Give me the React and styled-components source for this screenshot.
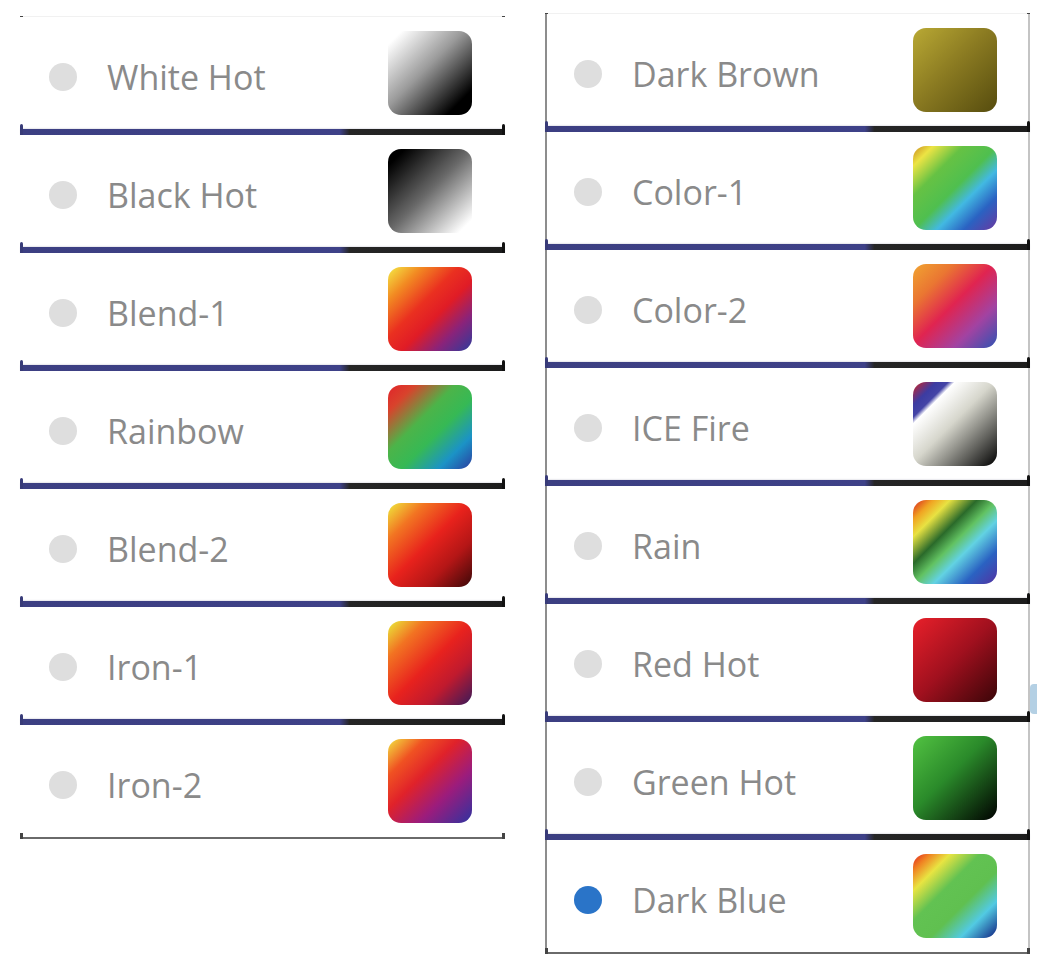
import styled, { createGlobalStyle } from 'styled-components';

const GlobalStyle = createGlobalStyle`
  html, body {
    margin: 0;
    padding: 0;
    background: #ffffff;
  }
  body {
    font-family: "Open Sans", "Noto Sans", sans-serif;
  }
`;

const Page = styled.div`
  display: flex;
  align-items: flex-start;
  gap: 40px;
  width: 1037px;
  height: 960px;
  padding-left: 20px;
  box-sizing: border-box;
  overflow: hidden;
  background: #fff;
`;

const Column = styled.div`
  width: 485px;
  display: flex;
  flex-direction: column;
  padding-top: ${p => p.$top}px;
`;

const Card = styled.div`
  position: relative;
  display: flex;
  align-items: center;
  height: 112px;
  box-sizing: border-box;
  background: #fff;
  border-left: ${p => (p.$framed ? '2px solid #8d8d8d' : '0')};
  border-right: ${p => (p.$framed ? '2px solid #c4c4c4' : '0')};
  padding-left: ${p => (p.$framed ? 27 : 29)}px;
  padding-right: ${p => (p.$framed ? 31 : 33)}px;
`;

const EdgeTab = styled.span`
  position: absolute;
  right: -9px;
  bottom: 2px;
  width: 7px;
  height: 30px;
  border-radius: 4px 0 0 4px;
  background: #b4d0e4;
`;

const Radio = styled.span`
  width: 28px;
  height: 28px;
  margin-top: 8px;
  border-radius: 50%;
  flex: none;
  background: ${p => (p.$checked ? '#2a74c8' : '#dedede')};
  filter: blur(0.6px);
`;

const Label = styled.span`
  margin-left: 30px;
  margin-top: 8px;
  font-size: 34px;
  color: #8a8a8a;
  white-space: nowrap;
`;

const Swatch = styled.span`
  margin-left: auto;
  width: 84px;
  height: 84px;
  flex: none;
  border-radius: 13px;
  background: ${p => p.$fill};
`;

const Track = styled.div`
  position: relative;
  height: 6px;
  margin: 0 1px;
  box-shadow: 0 0 2px rgba(40, 40, 80, 0.35);
  background: linear-gradient(
    90deg,
    #3c3f82 0%,
    #3e4188 ${p => p.$split}%,
    #262626 ${p => p.$split + 2}%,
    #1c1c1c 100%
  );

  &::before,
  &::after {
    content: '';
    position: absolute;
    top: -5px;
    width: 3px;
    height: 16px;
    border-radius: 2px;
  }
  &::before {
    left: -1px;
    background: #383b78;
  }
  &::after {
    right: -1px;
    background: #111;
  }
`;

const Rule = styled.div`
  position: relative;
  height: ${p => (p.$faint ? 1 : 2)}px;
  background: ${p => (p.$faint ? '#f1f1f1' : '#6a6a6a')};

  &::before,
  &::after {
    content: '';
    position: absolute;
    top: ${p => (p.$faint ? 0 : -4)}px;
    width: 3px;
    height: 6px;
    background: #444;
  }
  &::before {
    left: 0;
  }
  &::after {
    right: 0;
  }
`;

const leftItems = [
  { name: 'White Hot', fill: 'linear-gradient(135deg, #ffffff 8%, #9a9a9a 45%, #000000 85%)' },
  { name: 'Black Hot', fill: 'linear-gradient(135deg, #000000 10%, #6a6a6a 50%, #ffffff 92%)' },
  {
    name: 'Blend-1',
    fill: 'linear-gradient(135deg, #f4ea45 0%, #f28a22 20%, #ea3020 42%, #e01c26 58%, #8a237a 78%, #2d3b9c 100%)',
  },
  {
    name: 'Rainbow',
    fill: 'linear-gradient(135deg, #e2242a 0%, #d8432c 16%, #4cb449 40%, #36b955 58%, #1b93c6 80%, #2b3ea0 100%)',
  },
  {
    name: 'Blend-2',
    fill: 'linear-gradient(135deg, #efea3c 0%, #f27522 22%, #e8221c 48%, #b41616 72%, #3c0808 100%)',
  },
  {
    name: 'Iron-1',
    fill: 'linear-gradient(135deg, #e9ec3a 0%, #f27322 22%, #e8221e 50%, #c01a2e 72%, #3a1a5a 100%)',
  },
  {
    name: 'Iron-2',
    fill: 'linear-gradient(135deg, #f2e440 0%, #f05222 22%, #e0222a 42%, #9c1c7c 68%, #2f32a0 100%)',
  },
];

const rightItems = [
  { name: 'Dark Brown', fill: 'linear-gradient(135deg, #b9a934 0%, #8c7c22 45%, #564c0e 100%)' },
  {
    name: 'Color-1',
    fill: 'linear-gradient(135deg, #c98a1e 0%, #ece444 12%, #66c244 30%, #4fbf4f 50%, #42b9e2 64%, #2a62c2 80%, #6a38a0 100%)',
  },
  {
    name: 'Color-2',
    fill: 'linear-gradient(135deg, #f1a431 0%, #ea7632 24%, #e02450 48%, #a243a2 74%, #2f52b2 100%)',
  },
  {
    name: 'ICE Fire',
    fill: 'linear-gradient(135deg, #d22222 0%, #3c3ca2 14%, #4444a6 21%, #ffffff 25%, #d6d6cc 48%, #000000 100%)',
  },
  {
    name: 'Rain',
    fill: 'linear-gradient(135deg, #d82220 0%, #f0a422 12%, #e8e242 22%, #2a6a2a 38%, #62c262 50%, #62d2e2 62%, #2a62c2 80%, #5232a2 100%)',
  },
  { name: 'Red Hot', fill: 'linear-gradient(135deg, #e8202a 0%, #a0101e 50%, #3a0508 100%)', tab: true },
  { name: 'Green Hot', fill: 'linear-gradient(135deg, #52c242 0%, #2a8a2a 45%, #000000 100%)' },
  {
    name: 'Dark Blue',
    fill: 'linear-gradient(135deg, #e02020 0%, #f08222 10%, #e8e442 22%, #62c252 40%, #60c050 60%, #52cae2 78%, #102080 100%)',
    checked: true,
  },
];

const PaletteRow = ({ item, framed }) => (
  <Card $framed={framed}>
    <Radio $checked={item.checked} />
    <Label>{item.name}</Label>
    <Swatch $fill={item.fill} />
    {item.tab && <EdgeTab />}
  </Card>
);

const PaletteColumn = ({ items, framed, top }) => (
  <Column $top={top}>
    <Rule $faint />
    {items.map((item, i) => (
      <div key={item.name}>
        <PaletteRow item={item} framed={framed} />
        {i < items.length - 1 ? <Track $split={66} /> : <Rule />}
      </div>
    ))}
  </Column>
);

export default function App() {
  return (
    <>
      <GlobalStyle />
      <Page>
        <PaletteColumn items={leftItems} top={16} />
        <PaletteColumn items={rightItems} framed top={13} />
      </Page>
    </>
  );
}
